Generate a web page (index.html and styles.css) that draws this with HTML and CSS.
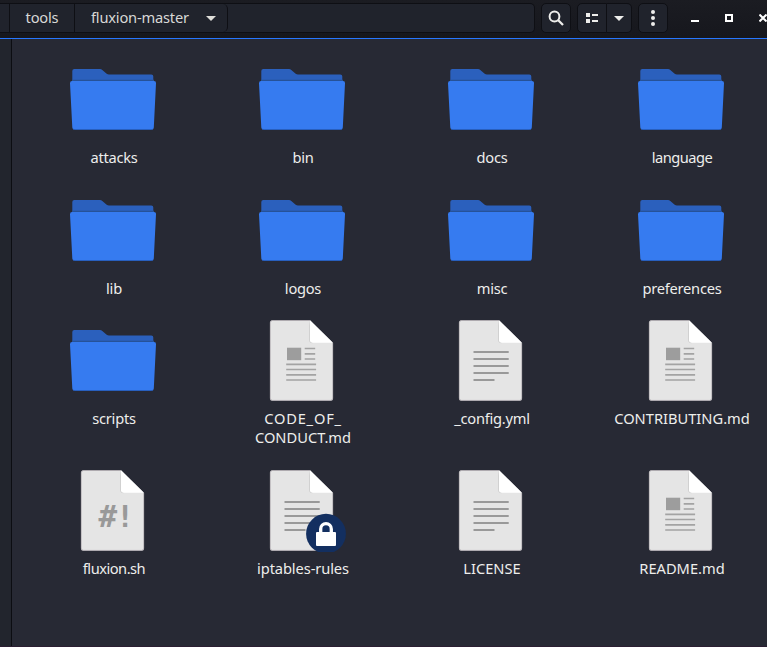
FILE: index.html
```html
<!DOCTYPE html>
<html lang="en">
<head>
<meta charset="utf-8">
<title>fluxion-master</title>
<link rel="stylesheet" href="styles.css">
</head>
<body>
<svg class="defs" aria-hidden="true">
  <symbol id="folder" viewBox="0 0 97 84">
    <path fill="#2b60bd" d="M7.300 30V14q0-2 2-2H35q1.300 0 2.300 1l4.400 3.700q1 .8 2.300.8h42.300q2 0 2 2V30z"/>
    <path fill="#265298" d="M7 22.700h82v2H7z"/>
    <path fill="#367bf0" d="M7 24h82q2.200 0 2 2.200l-2.200 44.200q-.1 2-2 2H9.400q-2 0-2.100-2L5 26.200q0-2.200 2-2.200z"/>
    <path fill="none" stroke="#285fbe" stroke-width="1" d="M8 72q.5.500 1.400.5h77.400q1 0 1.400-.5"/>
  </symbol>
  <symbol id="page" viewBox="0 0 97 84">
    <path fill="#e5e5e5" d="M18.500 2.200H56L79 25v55.200q0 2.500-2.500 2.500h-58q-2.500 0-2.500-2.500V4.700q0-2.500 2.500-2.500z"/>
    <path fill="none" stroke="#aaa5aa" stroke-width=".7" d="M78.700 25v55.200q0 2.200-2.200 2.200h-58q-2.200 0-2.200-2.200V4.700q0-2.200 2.200-2.200H56"/>
    <path fill="#c9c9c9" d="M55.300 2.200V22q0 3.200 3.200 3.200z"/>
    <path fill="#fff" d="M56 2.200 79 24.800H58.500q-2.500 0-2.500-2.500z"/>
  </symbol>
  <symbol id="text" viewBox="0 0 97 84">
    <use href="#page"/>
    <path stroke="#999" stroke-width="1.800" d="M30.500 34h35.200M30.500 41h35.200M30.500 48h35.200M30.500 55h35.200M30.500 62h21"/>
  </symbol>
  <symbol id="markdown" viewBox="0 0 97 84">
    <use href="#page"/>
    <path fill="#9d9d9d" d="M33 29.700h14.200v12.500H33z"/>
    <path stroke="#a3a3a3" stroke-width="1.700" d="M50.700 30.500h10.500M50.700 35.800h10.500M50.700 41h10.500M32.200 46.300h29.900M32.200 51.500h29.900M32.200 56.800h29.900M32.200 62h29.900"/>
  </symbol>
  <symbol id="locked" viewBox="0 0 97 84">
    <use href="#text"/>
    <circle cx="72" cy="65.700" r="19.900" fill="#132f60"/>
    <path fill="none" stroke="#fff" stroke-width="3.300" d="M66.700 66v-5a5.300 5.300 0 0 1 10.600 0v5"/>
    <rect x="62" y="64" width="20" height="14" rx="1" fill="#fff"/>
  </symbol>
</svg>

<header class="bar">
  <nav class="path">
    <span class="crumb stub"></span>
    <span class="crumb tools">tools</span>
    <span class="crumb current">fluxion-master
      <svg width="10" height="5"><path fill="#deded9" d="M0 0h10L5 5z"/></svg>
    </span>
  </nav>
  <button class="btn search" aria-label="Search">
    <svg width="16" height="16" fill="none" stroke="#eeeeec" stroke-width="2"><circle cx="6.500" cy="6.500" r="4.900"/><path d="m10 10 5 5" stroke-width="2.300"/></svg>
  </button>
  <div class="group">
    <button class="btn view" aria-label="View">
      <svg width="13" height="11" fill="#eeeeec"><path d="M0 0h4v4H0zM0 6h4v4H0zM6 1h6v2H6zM6 7h6v2H6z"/></svg>
    </button>
    <button class="btn more" aria-label="View options">
      <svg width="10" height="5"><path fill="#eeeeec" d="M0 0h10L5 5z"/></svg>
    </button>
  </div>
  <button class="btn menu" aria-label="Menu">
    <svg width="4" height="16" fill="#eeeeec"><circle cx="2" cy="2" r="2"/><circle cx="2" cy="8" r="2"/><circle cx="2" cy="14" r="2"/></svg>
  </button>
  <div class="window">
    <svg width="8" height="8"><path fill="#fff" d="M0 6h8v2H0z"/></svg>
    <svg width="8" height="8"><path fill="none" stroke="#fff" stroke-width="2" d="M1 1h6v6H1z"/></svg>
    <svg width="8" height="8"><path stroke="#fff" stroke-width="2" d="m.5.500 7 7m0-7-7 7"/></svg>
  </div>
</header>

<div class="body">
  <aside class="side"></aside>
  <main class="files">
    <div class="item"><svg><use href="#folder"/></svg><span>attacks</span></div>
    <div class="item"><svg><use href="#folder"/></svg><span>bin</span></div>
    <div class="item"><svg><use href="#folder"/></svg><span>docs</span></div>
    <div class="item"><svg><use href="#folder"/></svg><span class="tight">language</span></div>
    <div class="item"><svg><use href="#folder"/></svg><span>lib</span></div>
    <div class="item"><svg><use href="#folder"/></svg><span>logos</span></div>
    <div class="item"><svg><use href="#folder"/></svg><span>misc</span></div>
    <div class="item"><svg><use href="#folder"/></svg><span>preferences</span></div>
    <div class="item"><svg><use href="#folder"/></svg><span>scripts</span></div>
    <div class="item"><svg><use href="#markdown"/></svg><span class="caps"><span class="wide">CODE_OF_</span><br>CONDUCT.md</span></div>
    <div class="item"><svg><use href="#text"/></svg><span>_config.yml</span></div>
    <div class="item"><svg><use href="#markdown"/></svg><span class="caps">CONTRIBUTING.md</span></div>
    <div class="item"><svg viewBox="0 0 97 84"><use href="#page"/><text class="shebang" x="33.500" y="58.500">#</text><text class="shebang" x="50.700" y="58.500">!</text></svg><span class="tight">fluxion.sh</span></div>
    <div class="item"><svg><use href="#locked"/></svg><span class="rules">iptables-rules</span></div>
    <div class="item"><svg><use href="#text"/></svg><span class="caps">LICENSE</span></div>
    <div class="item"><svg><use href="#markdown"/></svg><span class="caps">README.md</span></div>
  </main>
</div>
</body>
</html>
```
FILE: styles.css
```css
* { box-sizing: border-box; }
html, body { height: 100%; }
body {
  margin: 0;
  overflow: hidden;
  display: flex;
  flex-direction: column;
  background: #272934;
  color: #eeeeec;
  font: 14.667px/19px "Noto Sans", sans-serif;
}
svg { display: block; flex: none; }
.defs { width: 0; height: 0; position: absolute; }
.shebang { font: bold 31px "DejaVu Sans Mono", monospace; fill: #999; }

.bar {
  flex: none;
  height: 39px;
  display: flex;
  align-items: flex-start;
  padding-top: 3px;
  background: linear-gradient(#1b1c22, #16171d);
  border-bottom: 1px solid #2777ff;
}
.path {
  width: 535px;
  height: 30px;
  display: flex;
  background: #20232c;
  border: 1px solid #0e0f14;
  border-left: 0;
  border-radius: 0 5px 5px 0;
}
.crumb {
  display: flex;
  align-items: center;
  justify-content: center;
  height: 28px;
  padding-bottom: 1px;
  border-right: 1px solid #0e0f14;
  color: #d8d8d6;
  letter-spacing: -.2px;
}
.stub { width: 10px; }
.tools { width: 65px; }
.current {
  width: 153px;
  justify-content: flex-start;
  padding-left: 16px;
  gap: 17px;
  border-radius: 0 5px 5px 0;
}
.current svg { margin-top: 1px; }
.btn {
  width: 30px;
  height: 30px;
  padding: 0;
  display: flex;
  align-items: center;
  justify-content: center;
  background: #20232c;
  border: 1px solid #0e0f14;
  border-radius: 5px;
}
.search { margin-left: 6px; }
.group { display: flex; margin-left: 6px; }
.view { border-radius: 5px 0 0 5px; }
.more { width: 25px; border-left: 0; border-radius: 0 5px 5px 0; }
.menu { margin-left: 6px; }
.window { display: flex; gap: 26px; margin: 11px 0 0 23px; }

.body { flex: 1; min-height: 0; display: flex; border-bottom: 1px solid #2b1e32; }
.side { flex: none; width: 12px; background: #22252d; border-right: 1px solid #0c0d12; }
.files {
  flex: none;
  display: grid;
  grid-template-columns: repeat(4, 189px);
  grid-template-rows: 131px 130px 150px 150px;
  padding: 18px 0 0 7px;
}
.item {
  display: flex;
  flex-direction: column;
  align-items: center;
  text-align: center;
  letter-spacing: -.25px;
}
.item:nth-child(4n) { margin: 0 -1px 0 1px; }
.item > svg { width: 97px; height: 84px; margin-bottom: 7px; letter-spacing: 0; }
.item > span { padding-left: 1px; }
.item .caps { letter-spacing: 0; }
.item .wide { letter-spacing: .8px; }
.item .tight { letter-spacing: -.5px; }
.item .rules { letter-spacing: -.1px; }
```
